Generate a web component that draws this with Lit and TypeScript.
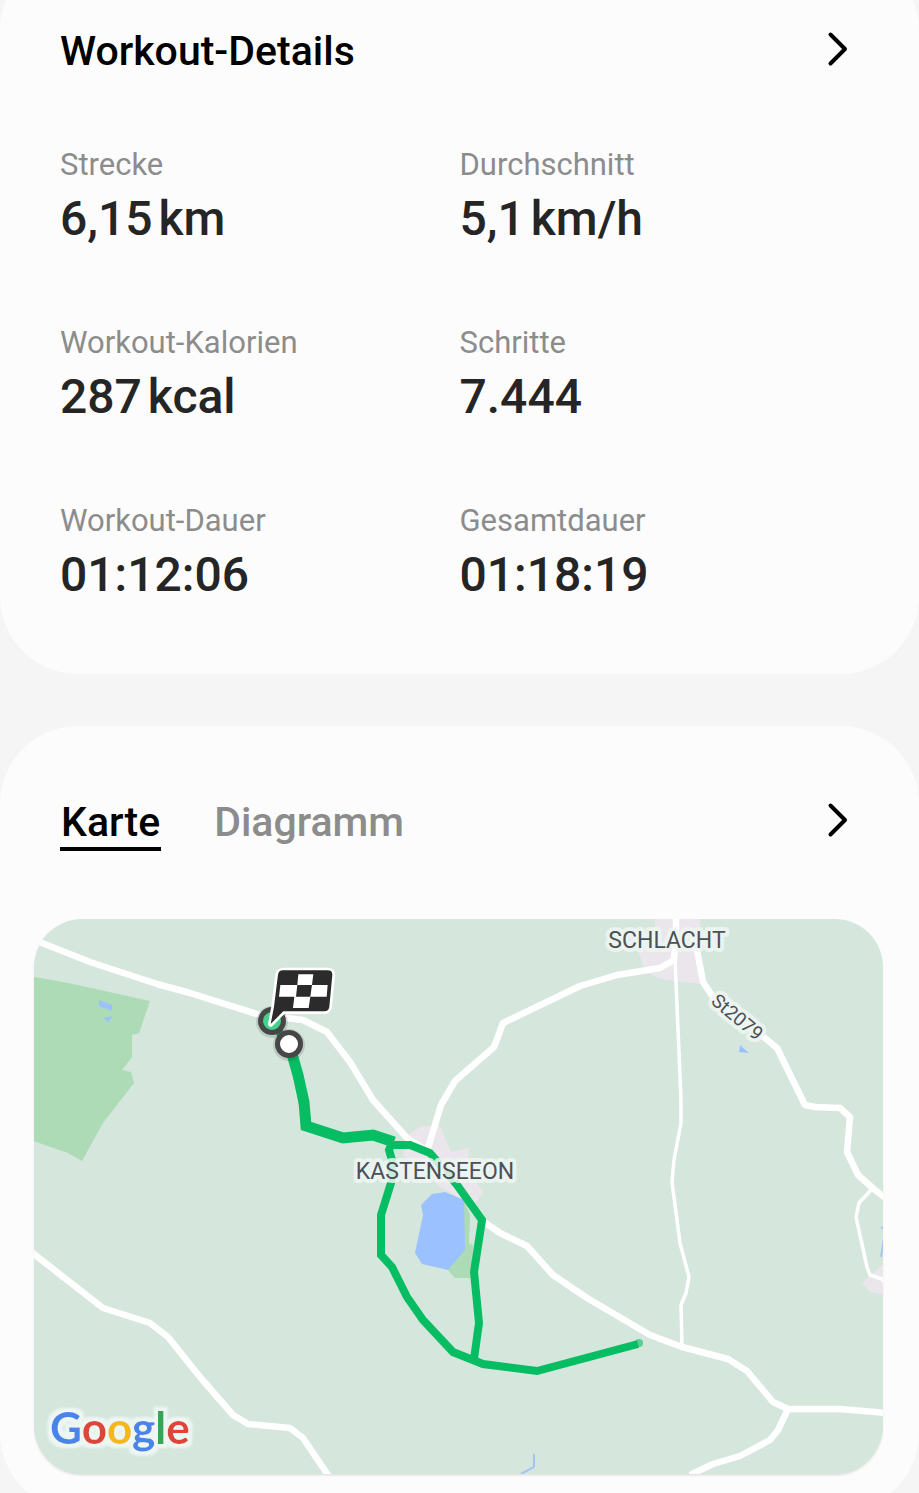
import { LitElement, html, css, svg } from "lit";
import { customElement, state } from "lit/decorators.js";

const chevron = html`<svg class="chevron" viewBox="0 0 44 44" aria-hidden="true">
  <path d="M15.5 7.5 L30 22 L15.5 36.5" />
</svg>`;

interface Stat {
  label: string;
  value: string;
  unit?: string;
}

const STATS: Stat[] = [
  { label: "Strecke", value: "6,15", unit: "km" },
  { label: "Durchschnitt", value: "5,1", unit: "km/h" },
  { label: "Workout-Kalorien", value: "287", unit: "kcal" },
  { label: "Schritte", value: "7.444" },
  { label: "Workout-Dauer", value: "01:12:06" },
  { label: "Gesamtdauer", value: "01:18:19" },
];

@customElement("workout-stats")
export class WorkoutStats extends LitElement {
  static styles = css`
    :host {
      display: block;
    }
    .stats {
      display: grid;
      grid-template-columns: 1fr 1fr;
      row-gap: 78px;
      margin: 0;
    }
    .stat {
      display: flex;
      flex-direction: column;
      gap: 8px;
    }
    .label {
      font-size: 31px;
      line-height: 36px;
      color: #8c8c8c;
    }
    .value {
      display: flex;
      gap: 6px;
      margin: 0;
      font-size: 48px;
      font-weight: 500;
      line-height: 56px;
      color: #252525;
    }
  `;

  render() {
    return html`<dl class="stats">
      ${STATS.map(
        (s) => html`<div class="stat">
          <dt class="label">${s.label}</dt>
          <dd class="value">
            <span>${s.value}</span>${s.unit ? html`<span>${s.unit}</span>` : null}
          </dd>
        </div>`
      )}
    </dl>`;
  }
}

const ROADS = [
  "M30 939 L42 943 L90 962 L157 984 L190 993 L260 1015 L303 1020 L327 1032 L350 1062 L373 1100 L407 1138 L430 1153 L457 1185 L484 1222 L500 1233 L527 1246 L553 1275 L587 1298 L650 1335 L682 1347 L728 1359 L747 1371 L773 1402 L788 1409 L840 1409 L886 1413",
  "M788 1409 L778 1430 L770 1440 L740 1456 L713 1464 L690 1475",
  "M676 915 L676 930 L674 960 L660 968 L617 975 L580 986 L503 1023 L494 1047 L455 1081 L441 1105 L428 1148",
  "M693 935 L697 950 L703 982 L715 1000 L760 1034 L777 1048 L805 1105 L815 1107 L840 1108 L850 1117 L847 1152 L858 1175 L875 1190 L888 1200",
  "M30 1251 L103 1308 L150 1323 L168 1337 L200 1377 L233 1415 L248 1424 L290 1428 L303 1438 L330 1478",
];

const LANES = [
  "M675 958 L681 1100 L681 1123 L674 1160 L672 1182 L680 1243 L689 1277 L686 1293 L681 1305 L682 1347",
  "M871 1190 L859 1203 L856 1217 L867 1267 L870 1275 L882 1279 L887 1286",
];

@customElement("route-map")
export class RouteMap extends LitElement {
  static styles = css`
    :host {
      display: block;
      border-radius: 48px;
      overflow: hidden;
      background: #d5e7dd;
      box-shadow: 0 2px 3px -1px rgba(0, 0, 0, 0.15);
    }
    .map {
      display: block;
      width: 100%;
      height: auto;
      font-family: Roboto, "Noto Sans", sans-serif;
    }
    .road,
    .lane,
    .route,
    .route-wide {
      fill: none;
      stroke-linejoin: round;
    }
    .road {
      stroke: #fff;
      stroke-width: 6.5;
    }
    .lane {
      stroke: #fff;
      stroke-width: 3.5;
    }
    .route,
    .route-wide {
      stroke: #07bd64;
      stroke-width: 8;
      stroke-linejoin: miter;
    }
    .route-wide {
      stroke-width: 11;
    }
    .route-tip {
      fill: #07bd64;
      opacity: 0.6;
    }
    .town {
      fill: #ebe6eb;
    }
    .wood {
      fill: #addbb5;
    }
    .water {
      fill: #9cc1ff;
    }
    .stream {
      fill: none;
      stroke: #a5c5f0;
      stroke-width: 2;
    }
    .place,
    .street {
      fill: #4d5056;
      stroke: #eef6f2;
      stroke-width: 8;
      stroke-opacity: 0.85;
      stroke-linejoin: round;
      paint-order: stroke;
      text-anchor: middle;
      font-size: 23px;
    }
    .street {
      font-size: 19px;
    }
    .marker {
      stroke: #474747;
      stroke-width: 5;
    }
    .halo {
      fill: #000;
      opacity: 0.12;
    }
    .start {
      fill: #fff;
    }
    .end {
      fill: #45d08b;
    }
    .flag {
      fill: #2b2b2b;
      stroke: #fff;
      stroke-width: 16;
      stroke-linejoin: round;
      paint-order: stroke;
    }
    .check {
      fill: #fff;
    }
    .brand {
      font-family: Lato, Roboto, sans-serif;
      font-size: 44px;
      font-weight: 700;
      filter: url(#outline);
    }
    .blue {
      fill: #4a84e8;
    }
    .red {
      fill: #dc4437;
    }
    .yellow {
      fill: #f2b91d;
    }
    .green {
      fill: #34a556;
    }
  `;

  render() {
    return html`<svg class="map" viewBox="34 919 849 555" role="img" aria-label="Karte">
      <defs>
        <filter id="outline" x="-10%" y="-20%" width="120%" height="140%">
          <feMorphology in="SourceAlpha" operator="dilate" radius="4" result="fat" />
          <feGaussianBlur in="fat" stdDeviation="1" result="soft" />
          <feFlood flood-color="#eef6f2" />
          <feComposite in2="soft" operator="in" result="edge" />
          <feMerge><feMergeNode in="edge" /><feMergeNode in="SourceGraphic" /></feMerge>
        </filter>
      </defs>
      <path class="wood" d="M30 976 L73 984 L150 1001 L139 1033 L132 1035 L132 1057 L122 1070 L131 1072 L134 1083 L103 1123 L82 1161 L68 1153 L30 1140 Z" />
      <path class="water" d="M99 1000 L112 1005 L112 1011 L99 1006 Z M103 1018 L113 1016 L108 1022 Z" />
      <path class="town" d="M655 915 H701 L698 950 L703 984 L665 980 L650 974 L643 965 L638 950 L655 945 Z" />
      <path class="town" d="M410 1133 L422 1126 L440 1126 L451 1152 L469 1148 L467 1170 L483 1192 L477 1202 L464 1200 L440 1187 L403 1155 Z" />
      <path class="town" d="M886 1262 L862 1283 L870 1292 L886 1295 Z" />
      <path class="wood" d="M463 1198 L470 1215 L469 1243 L473 1245 L472 1278 L455 1278 L446 1268 L463 1248 Z" />
      <path class="water" d="M421 1205 L432 1194 L445 1192 L464 1200 L465 1250 L448 1270 L422 1264 L415 1253 L423 1215 Z" />
      <path class="water" d="M740 1045 L749 1053 L739 1052 Z" />
      <path class="stream" d="M881 1227 L884 1229 M884 1238 L881 1257" />
      <path class="stream" d="M521 1474 L534 1467 L534 1454" />
      ${LANES.map((d) => svg`<path class="lane" d=${d} />`)}
      ${ROADS.map((d) => svg`<path class="road" d=${d} />`)}
      <path class="route" d="M392 1143 L389 1150 L392 1160 L391 1183 L381 1215 L381 1255 L392 1267 L407 1297 L423 1320 L453 1352 L483 1364 L537 1371 L638 1344" />
      <circle class="route-tip" cx="639" cy="1343" r="4" />
      <path class="route" d="M388 1145 L410 1145 L430 1153 L457 1185 L482 1220 L474 1272 L479 1323 L474 1359" />
      <path class="route" d="M271 1022 L289 1044 L298 1074 L303 1105" />
      <path class="route-wide" d="M292 1054 L298 1075 L304 1102 L306 1126 L343 1138 L373 1135 L394 1142" />
      <text class="place" x="667" y="948">SCHLACHT</text>
      <text class="place" x="435" y="1179">KASTENSEEON</text>
      <text class="street" transform="translate(733 1022) rotate(40)">St2079</text>
      <circle class="halo" cx="272" cy="1022" r="16" />
      <circle class="marker end" cx="272" cy="1021" r="11.5" />
      <circle class="halo" cx="289" cy="1045" r="16" />
      <circle class="marker start" cx="289" cy="1044" r="11.5" />
      <g transform="translate(230 950) scale(0.3333)">
        <path class="flag" d="M144 74 Q146 61 159 61 H293 Q308 61 307 76 L298 170 Q296 184 283 184 H160 L122 222 L132 170 Z" />
        <path class="check" d="M205 73 H250 L246 105 H202 Z M151 105 H202 L198 140 H147 Z M246 105 H293 L290 140 H241 Z M193 140 H241 L236 174 H189 Z" />
      </g>
      <text class="brand" x="50" y="1444"><tspan class="blue">G</tspan><tspan class="red">o</tspan><tspan class="yellow">o</tspan><tspan class="blue">g</tspan><tspan class="green">l</tspan><tspan class="red">e</tspan></text>
    </svg>`;
  }
}

@customElement("app-root")
export class AppRoot extends LitElement {
  static styles = css`
    :host {
      display: block;
      height: 100vh;
      overflow-y: auto;
      scrollbar-width: none;
      background: #f5f5f5;
      font-family: Roboto, "Noto Sans", sans-serif;
    }
    .page {
      display: flex;
      flex-direction: column;
      gap: 52px;
      margin-top: -48px;
    }
    .card {
      border-radius: 78px;
      background: #fcfcfc;
    }
    .details {
      padding: 75px 60px 71px;
    }
    .map-card {
      padding: 72px 0 37px;
    }
    .head {
      display: flex;
      align-items: flex-start;
      justify-content: space-between;
    }
    .details .head {
      margin-bottom: 72px;
    }
    .map-card .head {
      margin: 0 60px 68px;
    }
    .title {
      margin: 0;
      font-size: 41px;
      font-weight: 500;
      line-height: 48px;
      color: #000;
    }
    .tabs {
      display: flex;
      gap: 52px;
    }
    .tab,
    .more {
      border: 0;
      padding: 0;
      background: none;
      font: inherit;
      cursor: pointer;
    }
    .tab {
      padding: 0 1px 1px;
      border-bottom: 4px solid transparent;
      font-size: 41px;
      font-weight: 500;
      line-height: 48px;
      color: #8c8c8c;
    }
    .tab.active {
      border-color: #000;
      color: #000;
    }
    .more {
      display: block;
      flex: none;
      height: 44px;
    }
    .chevron {
      display: block;
      width: 44px;
      height: 44px;
      fill: none;
      stroke: #000;
      stroke-width: 4;
      stroke-linecap: round;
      stroke-linejoin: round;
    }
    .map {
      margin: 0 36px 0 34px;
    }
  `;

  @state() private tab = "Karte";

  render() {
    return html`<main class="page">
      <section class="card details">
        <header class="head">
          <h2 class="title">Workout-Details</h2>
          <button class="more" aria-label="Workout-Details öffnen">${chevron}</button>
        </header>
        <workout-stats></workout-stats>
      </section>
      <section class="card map-card">
        <header class="head">
          <div class="tabs" role="tablist">
            ${["Karte", "Diagramm"].map(
              (t) => html`<button
                class="tab ${t === this.tab ? "active" : ""}"
                role="tab"
                aria-selected=${t === this.tab}
                @click=${() => (this.tab = t)}
              >${t}</button>`
            )}
          </div>
          <button class="more" aria-label="Karte öffnen">${chevron}</button>
        </header>
        <route-map class="map"></route-map>
      </section>
    </main>`;
  }
}
